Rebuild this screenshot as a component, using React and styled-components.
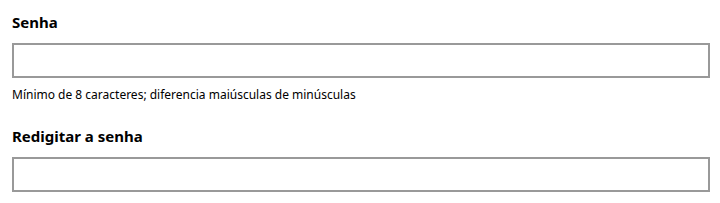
import React from "react"
import styled, { createGlobalStyle } from "styled-components"

const GlobalStyle = createGlobalStyle`
    body {
        margin: 0;
        background: #ffffff;
        font-family: "Segoe UI", "Noto Sans", "Open Sans", sans-serif;
        color: #000000;
    }
`

const Form = styled.div`
    padding: 12px 10px 0 12px;
    display: flex;
    flex-direction: column;
`

const Field = styled.div`
    display: flex;
    flex-direction: column;
    margin-bottom: ${props => props.gap || 0}px;
`

const Label = styled.label`
    font-size: 15px;
    font-weight: 700;
    line-height: 20px;
    margin-bottom: 11px;
`

const Input = styled.input`
    box-sizing: border-box;
    width: 698px;
    height: 35px;
    border: 2px solid #999999;
    background: #ffffff;
    outline: none;
    padding: 0 8px;
`

const Hint = styled.p`
    font-size: 12px;
    line-height: 16px;
    margin: 9px 0 0;
`

export default function App() {
    return (
        <>
            <GlobalStyle />
            <Form>
                <Field gap={23}>
                    <Label>Senha</Label>
                    <Input type="password" />
                    <Hint>Mínimo de 8 caracteres; diferencia maiúsculas de minúsculas</Hint>
                </Field>
                <Field>
                    <Label>Redigitar a senha</Label>
                    <Input type="password" />
                </Field>
            </Form>
        </>
    )
}
